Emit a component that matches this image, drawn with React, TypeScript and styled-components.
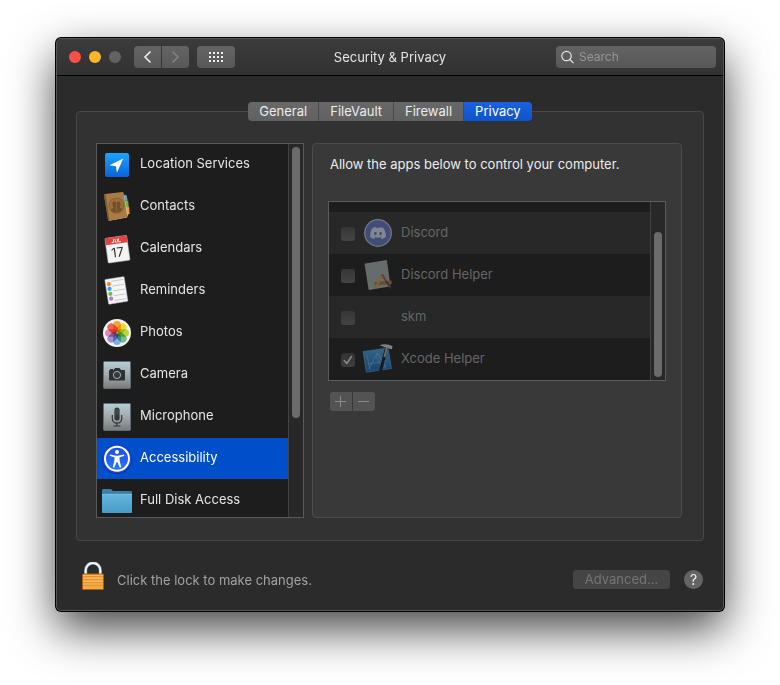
import React, { useState } from "react";
import styled, { createGlobalStyle } from "styled-components";
import { FaDiscord } from "react-icons/fa";

const GlobalStyle = createGlobalStyle`
  * { box-sizing: border-box; }
  body {
    margin: 0;
    background: #fff;
    font-family: Inter, "Liberation Sans", sans-serif;
    font-size: 13px;
    line-height: 16px;
    color: #dfdfdf;
  }
  button, input { font: inherit; color: inherit; margin: 0; }
`;

const Desktop = styled.main`
  padding: 38px 56px 74px;
`;

const Window = styled.section`
  border: 1px solid #565656;
  border-radius: 5px;
  background: #2b2b2b;
  overflow: hidden;
  box-shadow: 0 0 0 1px #000, 0 18px 46px rgba(0, 0, 0, 0.74);
`;

const Toolbar = styled.header`
  display: grid;
  grid-template-columns: 1fr auto 1fr;
  align-items: center;
  height: 37px;
  padding: 0 7px;
  border-bottom: 1px solid #000;
  background: linear-gradient(#3b3b3b, #323232);
`;

const ToolbarStart = styled.div`
  display: flex;
  align-items: center;
  gap: 8px;
  padding-left: 5px;
`;

const Light = styled.button<{ $color: string }>`
  width: 12px;
  height: 12px;
  padding: 0;
  border: 0;
  border-radius: 50%;
  background: ${(p) => p.$color};
`;

const History = styled.div`
  display: flex;
  gap: 1px;
  margin-left: 5px;
`;

const ToolButton = styled.button<{ $shape: string; $width: number }>`
  display: grid;
  place-items: center;
  width: ${(p) => p.$width}px;
  height: 22px;
  padding: 0;
  border: 0;
  border-radius: ${(p) => p.$shape};
  background: linear-gradient(#646464, #585858);
`;

const Title = styled.h1`
  margin: 0;
  font-size: 13px;
  font-weight: 400;
  color: #e6e6e6;
`;

const Search = styled.label`
  display: flex;
  align-items: center;
  justify-self: end;
  gap: 5px;
  width: 160px;
  height: 22px;
  padding: 0 5px;
  border-radius: 4px;
  background: linear-gradient(#636363, #575757);
`;

const SearchInput = styled.input`
  flex: 1;
  min-width: 0;
  padding: 0;
  border: 0;
  outline: 0;
  background: none;
  font-size: 12px;
  &::placeholder { color: #969696; opacity: 1; }
`;

const Body = styled.div`
  padding: 26px 19px 0;
`;

const Tabs = styled.div`
  position: relative;
  display: flex;
  width: fit-content;
  margin: 0 auto -10px;
  border-radius: 4px;
  overflow: hidden;
`;

const Tab = styled.button<{ $active: boolean }>`
  height: 19px;
  padding: 0 11px;
  border: 0;
  border-right: 1px solid ${(p) => (p.$active ? "transparent" : "#4a4a4a")};
  line-height: 19px;
  color: ${(p) => (p.$active ? "#fff" : "#ececec")};
  background: ${(p) => (p.$active ? "linear-gradient(#1962e4, #1153c8) border-box" : "linear-gradient(#686868, #616161)")};
  &:last-child { border-right: 0; }
`;

const Panel = styled.div`
  display: flex;
  gap: 8px;
  padding: 31px 21px 22px 19px;
  border: 1px solid #484848;
  border-radius: 4px;
  background: #323232;
`;

const Sidebar = styled.nav`
  display: flex;
  flex: 0 0 208px;
  height: 375px;
  border: 1px solid #5a5a5a;
  background: #1d1d1d;
  overflow: hidden;
`;

const SidebarList = styled.div`
  display: flex;
  flex: 1;
  flex-direction: column;
  gap: 1px;
`;

const SidebarItem = styled.button<{ $active: boolean }>`
  display: flex;
  align-items: center;
  flex: 0 0 41px;
  gap: 8px;
  padding: 0 5px;
  border: 0;
  text-align: left;
  color: ${(p) => (p.$active ? "#fff" : "#e6e6e6")};
  background: ${(p) => (p.$active ? "#004fca" : "transparent")};
`;

const ItemLabel = styled.span`
  padding-bottom: 3px;
`;

const IconSvg = styled.svg<{ $dim?: boolean }>`
  display: block;
  flex: 0 0 30px;
  width: 30px;
  height: 30px;
  overflow: visible;
  opacity: ${(p) => (p.$dim ? 0.55 : 1)};
`;

const Petals = styled.g`
  isolation: isolate;
  opacity: 0.95;
`;

const Petal = styled.rect`
  mix-blend-mode: multiply;
`;

const ScrollTrack = styled.div<{ $start: number }>`
  flex: 0 0 15px;
  padding: ${(p) => p.$start}px 3px 3px;
  border-left: 1px solid #414141;
  background: #282828;
`;

const ScrollThumb = styled.div<{ $length: number }>`
  width: 8px;
  height: ${(p) => p.$length}px;
  border-radius: 4px;
  background: #6b6b6b;
`;

const Detail = styled.section`
  flex: 1;
  min-width: 0;
  padding: 12px 15px 0;
  border: 1px solid #4b4b4b;
  border-radius: 4px;
  background: #393939;
`;

const DetailTitle = styled.h2`
  margin: 0 2px 29px;
  font-size: 13px;
  font-weight: 400;
  color: #ececec;
`;

const AppBox = styled.div`
  display: flex;
  border: 1px solid #5c5c5c;
  background: #1d1d1d;
`;

const AppList = styled.div`
  flex: 1;
  padding-top: 10px;
`;

const AppRow = styled.label`
  display: flex;
  align-items: center;
  gap: 8px;
  height: 42px;
  padding-left: 12px;
  color: #666;
  &:nth-child(odd) { background: #282828; }
`;

const Check = styled.input`
  appearance: none;
  width: 14px;
  height: 14px;
  margin-top: 2px;
  border-radius: 3px;
  background: linear-gradient(#363636, #444);
  &:checked {
    background: url("data:image/svg+xml,%3Csvg xmlns='http://www.w3.org/2000/svg' viewBox='0 0 14 14'%3E%3Cpath d='M3.2 7.6l2.6 2.9 4.7-7' fill='none' stroke='%238a8a8a' stroke-width='1.5' stroke-linecap='round' stroke-linejoin='round'/%3E%3C/svg%3E"), linear-gradient(#333, #3d3d3d);
  }
`;

const EditButtons = styled.div`
  display: flex;
  gap: 1px;
  margin: 11px 2px 0;
`;

const EditButton = styled.button`
  display: grid;
  place-items: center;
  width: 22px;
  height: 19px;
  padding: 0;
  border: 0;
  background: #535353;
  &:first-child { border-radius: 3px 0 0 3px; }
  &:last-child { border-radius: 0 3px 3px 0; }
`;

const Footer = styled.footer`
  display: flex;
  align-items: flex-end;
  padding: 21px 20px 20px 25px;
`;

const LockButton = styled.button`
  display: block;
  width: 22px;
  height: 28px;
  padding: 0;
  border: 0;
  background: none;
`;

const LockText = styled.p`
  flex: 1;
  margin: 0 13px 2px;
  color: #a2a2a2;
`;

const Actions = styled.div`
  display: flex;
  gap: 14px;
  margin-bottom: 1px;
`;

const Advanced = styled.button`
  height: 19px;
  padding: 0;
  width: 97px;
  border: 0;
  border-radius: 3px;
  line-height: 19px;
  color: #757575;
  background: #454545;
`;

const Help = styled.button`
  width: 19px;
  height: 19px;
  padding: 0;
  border: 0;
  border-radius: 50%;
  font-size: 14px;
  line-height: 19px;
  color: #f0f0f0;
  background: #646464;
`;

type IconProps = { children: React.ReactNode; dim?: boolean };

const Icon = ({ children, dim }: IconProps) => (
  <IconSvg viewBox="0 0 30 30" $dim={dim} aria-hidden="true">
    {children}
  </IconSvg>
);

const LocationIcon = () => (
  <Icon>
    <defs>
      <linearGradient id="loc" x2="0" y2="1">
        <stop stopColor="#1ba5fa" />
        <stop offset="1" stopColor="#0b62dc" />
      </linearGradient>
    </defs>
    <rect x="3" y="3" width="24" height="24" rx="2" fill="url(#loc)" />
    <path d="M21.3 8.4 7.4 15.2l6.6 1.1.9 6.4z" fill="#fff" />
  </Icon>
);

const ContactsIcon = () => (
  <Icon>
    <path d="M21 3l3.600 .3 1 5-3 1z" fill="#57a5dc" />
    <path d="M22.500 9l3.600-.5 .6 6-3 1z" fill="#62bd48" />
    <path d="M23.500 15l3.600-.6.5 7.600-3 .8z" fill="#f0a02c" />
    <path d="M22 2l3.800 21-.8 2.600-18 3.200" fill="#d8cdb8" />
    <path d="M2 3.200Q2 2.300 3 2.100L20.200-.1q1.200-.1 1.400.9l3.600 23.300q.1 1.100-.9 1.300L7.400 28.800q-1.100.1-1.300-.9z" fill="#a97c46" />
    <path d="M2 3.200Q2 2.300 3 2.100l.6-.1 3.900 26.700-.5.1q-.8 0-.9-.9z" fill="#80592d" />
    <circle cx="14.500" cy="13.600" r="7.600" fill="#99703c" stroke="#7d5730" strokeWidth=".7" />
    <path d="M9.100 18.400c.2-2.200 2.300-1.600 2.300-3.200-1.600-2-1.400-5.600.9-5.600 1.400 0 2 .8 2.100 1.700.3-1.200 1-1.900 2.200-1.900 2.400 0 2.600 3.400 1.200 5.300 0 1.700 2 .9 2.400 2.800-2.600 3.600-8 4-11.100.9z" fill="#73502a" />
    <path d="M14.300 11.200q1 3.500-.2 4.800l1.100 4" stroke="#9b6e3b" strokeWidth=".8" fill="none" />
  </Icon>
);

const CalendarIcon = () => (
  <Icon>
    <g transform="rotate(-8 15 15)">
      <rect x="4.400" y="2.800" width="22" height="25" rx="1" fill="#f4f4f4" stroke="#b9b9b9" strokeWidth=".5" />
      <path d="M4.400 9.800v-6q0-1 1-1h20q1 0 1 1v6z" fill="#e04440" />
      <text x="15.400" y="8.600" textAnchor="middle" fontSize="5" fontWeight="700" fill="#fff">JUL</text>
      <text x="15.200" y="23" textAnchor="middle" fontSize="13" fill="#2f2f2f">17</text>
    </g>
  </Icon>
);

const RemindersIcon = () => (
  <Icon>
    <g transform="rotate(-9 15 15)">
      <rect x="4.700" y="1.800" width="19.500" height="25" rx=".8" fill="#f5f5f5" stroke="#bdbdbd" strokeWidth=".5" />
      <path d="M11 9.400h12M11 14.300h12M11 19.200h12M11 24h12M11 4.500h12" stroke="#b9b9b9" strokeWidth=".7" />
      <circle cx="8" cy="6.900" r="2.100" fill="#f58a2c" />
      <circle cx="8" cy="11.800" r="2.100" fill="#3aa0f2" />
      <circle cx="8" cy="16.700" r="2.100" fill="#62c544" />
      <circle cx="8" cy="21.600" r="2.100" fill="#b873dc" />
    </g>
  </Icon>
);

const PETALS = ["#f9a02c", "#f2dc20", "#b2d63c", "#63bd86", "#74aee0", "#9c8bd0", "#dc86b8", "#f4604c"];

const PhotosIcon = () => (
  <Icon>
    <circle cx="15" cy="15" r="14" fill="#f4f4f4" />
    <Petals>
      {PETALS.map((color, i) => (
        <Petal
          key={color}
          x="11.200"
          y="3"
          width="7.600"
          height="11.600"
          rx="3.800"
          fill={color}
          transform={`rotate(${i * 45} 15 15)`}
        />
      ))}
    </Petals>
  </Icon>
);

const Plate = ({ id }: { id: string }) => (
  <>
    <defs>
      <linearGradient id={id} x2="0" y2="1">
        <stop stopColor="#b5ced8" />
        <stop offset=".5" stopColor="#a0a9ab" />
        <stop offset="1" stopColor="#7b7b79" />
      </linearGradient>
    </defs>
    <rect x="1.500" y="1.500" width="27" height="27" rx="1" fill={`url(#${id})`} stroke="#5e6d77" />
  </>
);

const CameraIcon = () => (
  <Icon>
    <Plate id="camera-plate" />
    <path d="M8 10v-1h3v1h.5l1.500-2h4.500l1.500 2H22q1 0 1 1v8.500q0 1-1 1H8q-1 0-1-1V11q0-1 1-1z" fill="#2e3133" />
    <circle cx="15" cy="15" r="3.600" fill="#35393b" stroke="#a7b0b3" strokeWidth="1" />
  </Icon>
);

const MicrophoneIcon = () => (
  <Icon>
    <Plate id="mic-plate" />
    <rect x="12.400" y="5.500" width="5.200" height="13" rx="2.600" fill="#35383a" />
    <path d="M13 8h4M13 10h4M13 12h4" stroke="#676c6f" strokeWidth=".5" />
    <path d="M10.300 13v3.400a4.700 4.700 0 0 0 9.400 0V13M15 21v3M11.500 24h7" stroke="#303335" strokeWidth="1.200" fill="none" />
  </Icon>
);

const AccessibilityIcon = () => (
  <Icon>
    <defs>
      <linearGradient id="acc" x2="0" y2="1">
        <stop stopColor="#1a50df" />
        <stop offset="1" stopColor="#2877ff" />
      </linearGradient>
    </defs>
    <circle cx="15" cy="15.200" r="14.800" fill="#092e9e" opacity=".7" />
    <circle cx="15" cy="14.700" r="14.300" fill="#1c43e0" />
    <circle cx="15" cy="14.700" r="12" fill="url(#acc)" stroke="#fff" strokeWidth="2" />
    <circle cx="15" cy="8" r="2" fill="#fff" />
    <path d="M8 10.400l5 1.100q2 .4 4 0l5-1.100.3 1.300-4.900 1.700.3 3.700 1.600 6.200-1.500.5-2.500-5.900h-.6l-2.500 5.900-1.500-.5 1.600-6.200.3-3.700-4.900-1.700z" fill="#fff" />
  </Icon>
);

const FolderIcon = () => (
  <Icon>
    <defs>
      <linearGradient id="folder" x2="0" y2="1">
        <stop stopColor="#65b5dc" />
        <stop offset="1" stopColor="#459bc9" />
      </linearGradient>
    </defs>
    <path d="M0 26V4.500Q0 3 1.400 3h7q1 0 1.600.9l.8 1.200H28.500q1.500 0 1.500 1.400V26z" fill="#3b81a6" />
    <path d="M0 8h30v18.200q0 .8-.8.8H.8q-.8 0-.8-.8z" fill="url(#folder)" />
    <path d="M0 8.300h30" stroke="#84c7e6" strokeWidth=".6" />
  </Icon>
);

const DiscordIcon = () => (
  <Icon dim>
    <circle cx="15" cy="15" r="13.300" fill="#566bc0" stroke="#b5b8bd" strokeWidth="1.300" />
    <FaDiscord x={6.5} y={6.5} size={17} color="#d0d3dc" />
  </Icon>
);

const HelperIcon = () => (
  <Icon dim>
    <path d="M2 4l21.500-3.500L27 26 6 29.500z" fill="#a3abad" stroke="#c0c5c6" strokeWidth=".7" />
    <path d="M11.500 22l17-1.400.3 3.400-17 1.400z" fill="#a9743c" />
    <path d="M20 14l-7.500 14" stroke="#d3a03d" strokeWidth="2.200" />
    <path d="M19 14.500l8.500 13.500" stroke="#b54a36" strokeWidth="2" />
    <path d="M21 17.500l7 11" stroke="#3b3f48" strokeWidth="1.200" />
    <path d="M20.600 16.500l3 4.600" stroke="#7092c8" strokeWidth="1" />
  </Icon>
);

const XcodeIcon = () => (
  <Icon dim>
    <defs>
      <linearGradient id="xcode" x2="0" y2="1">
        <stop stopColor="#48a4d8" />
        <stop offset="1" stopColor="#1463b8" />
      </linearGradient>
    </defs>
    <path d="M0 7.600l25-3.700 3.600 20.600L3.300 28.200z" fill="url(#xcode)" stroke="#58b4e0" strokeWidth=".6" />
    <path d="M6 24.500l8-15 9 13M5 20l19-3M12.500 12l3-3 7 14-3 1zM4 11l3 15" stroke="#93d0f0" strokeWidth=".5" fill="none" />
    <path d="M23.300 4.500L17.500 27" stroke="#17191c" strokeWidth="3" />
    <path d="M24 2.500L21.500 13" stroke="#a7abad" strokeWidth="2" />
    <path d="M16.500 1.600Q20-.8 26 .8l3.600 1.500-.7 3-3-.7-1-1.200-3.400-.2Q19 1.800 16.500 1.600z" fill="#d2d4d6" />
  </Icon>
);

const SERVICES = [
  { name: "Location Services", Glyph: LocationIcon },
  { name: "Contacts", Glyph: ContactsIcon },
  { name: "Calendars", Glyph: CalendarIcon },
  { name: "Reminders", Glyph: RemindersIcon },
  { name: "Photos", Glyph: PhotosIcon },
  { name: "Camera", Glyph: CameraIcon },
  { name: "Microphone", Glyph: MicrophoneIcon },
  { name: "Accessibility", Glyph: AccessibilityIcon },
  { name: "Full Disk Access", Glyph: FolderIcon },
];

const APPS = [
  { name: "Discord", glyph: <DiscordIcon />, allowed: false },
  { name: "Discord Helper", glyph: <HelperIcon />, allowed: false },
  { name: "skm", glyph: <Icon>{null}</Icon>, allowed: false },
  { name: "Xcode Helper", glyph: <XcodeIcon />, allowed: true },
];

const TABS = ["General", "FileVault", "Firewall", "Privacy"];

const DOT_COLUMNS = [0, 4, 8, 12];
const DOT_ROWS = [0, 4, 8];

export default function App() {
  const [tab, setTab] = useState("Privacy");
  const [service, setService] = useState("Accessibility");

  return (
    <>
      <GlobalStyle />
      <Desktop>
        <Window>
          <Toolbar>
            <ToolbarStart>
              <Light $color="#fe4e48" aria-label="Close" />
              <Light $color="#fdb42b" aria-label="Minimize" />
              <Light $color="#626262" aria-label="Zoom" disabled />
              <History>
                <ToolButton $shape="4px 0 0 4px" $width={27} aria-label="Back">
                  <svg width="9" height="14" viewBox="0 0 9 14" fill="none" stroke="#f0f0f0" strokeWidth="1.600">
                    <path d="M7.500 1.500 2 7l5.500 5.500" />
                  </svg>
                </ToolButton>
                <ToolButton $shape="0 4px 4px 0" $width={27} aria-label="Forward" disabled>
                  <svg width="9" height="14" viewBox="0 0 9 14" fill="none" stroke="#858585" strokeWidth="1.500">
                    <path d="M1.500 1.500 7 7l-5.500 5.500" />
                  </svg>
                </ToolButton>
              </History>
              <ToolButton $shape="4px" $width={38} aria-label="Show all preferences">
                <svg width="14" height="10" viewBox="0 0 14 10" fill="#efefef">
                  {DOT_ROWS.map((y) => DOT_COLUMNS.map((x) => <rect key={`${x}-${y}`} x={x} y={y} width="2" height="2" />))}
                </svg>
              </ToolButton>
            </ToolbarStart>
            <Title>Security &amp; Privacy</Title>
            <Search>
              <svg width="13" height="14" viewBox="0 0 13 14" fill="none" stroke="#e4e4e4" strokeWidth="1.200">
                <circle cx="5.500" cy="6" r="4.700" />
                <path d="M8.900 9.500l3.600 3.700" />
              </svg>
              <SearchInput type="search" placeholder="Search" aria-label="Search" />
            </Search>
          </Toolbar>
          <Body>
            <Tabs role="tablist">
              {TABS.map((name) => (
                <Tab key={name} role="tab" aria-selected={tab === name} $active={tab === name} onClick={() => setTab(name)}>
                  {name}
                </Tab>
              ))}
            </Tabs>
            <Panel>
              <Sidebar>
                <SidebarList>
                  {SERVICES.map(({ name, Glyph }) => (
                    <SidebarItem key={name} $active={service === name} onClick={() => setService(name)}>
                      <Glyph />
                      <ItemLabel>{name}</ItemLabel>
                    </SidebarItem>
                  ))}
                </SidebarList>
                <ScrollTrack $start={3}>
                  <ScrollThumb $length={271} />
                </ScrollTrack>
              </Sidebar>
              <Detail>
                <DetailTitle>Allow the apps below to control your computer.</DetailTitle>
                <AppBox>
                  <AppList>
                    {APPS.map((app) => (
                      <AppRow key={app.name}>
                        <Check type="checkbox" defaultChecked={app.allowed} disabled />
                        {app.glyph}
                        <ItemLabel>{app.name}</ItemLabel>
                      </AppRow>
                    ))}
                  </AppList>
                  <ScrollTrack $start={30}>
                    <ScrollThumb $length={145} />
                  </ScrollTrack>
                </AppBox>
                <EditButtons>
                  <EditButton aria-label="Add app" disabled>
                    <svg width="12" height="12" viewBox="0 0 12 12" stroke="#8a8a8a">
                      <path d="M0 5.500h11M5.500 0v11" />
                    </svg>
                  </EditButton>
                  <EditButton aria-label="Remove app" disabled>
                    <svg width="12" height="12" viewBox="0 0 12 12" stroke="#8a8a8a">
                      <path d="M0 5.500h11" />
                    </svg>
                  </EditButton>
                </EditButtons>
              </Detail>
            </Panel>
          </Body>
          <Footer>
            <LockButton aria-label="Unlock">
              <svg width="22" height="28" viewBox="0 0 22 28">
                <path d="M3.700 13V8.300a7.300 7.300 0 0 1 14.600 0V13" fill="none" stroke="#8ba2b4" strokeWidth="3" />
                <path d="M3.700 13V8.300a7.300 7.300 0 0 1 14.600 0V13" fill="none" stroke="#f2f7fa" strokeWidth="2" />
                <rect x=".5" y="12" width="21" height="15.500" rx=".8" fill="#f4a944" stroke="#ad5d12" />
                <path d="M1 14.500h20M1 17.500h20M1 20.500h20M1 23.500h20" stroke="#e2942f" />
                <path d="M1 13.500h20M1 16.500h20M1 19.500h20" stroke="#fcbc5c" strokeWidth=".8" />
              </svg>
            </LockButton>
            <LockText>Click the lock to make changes.</LockText>
            <Actions>
              <Advanced disabled>Advanced...</Advanced>
              <Help aria-label="Help">?</Help>
            </Actions>
          </Footer>
        </Window>
      </Desktop>
    </>
  );
}
